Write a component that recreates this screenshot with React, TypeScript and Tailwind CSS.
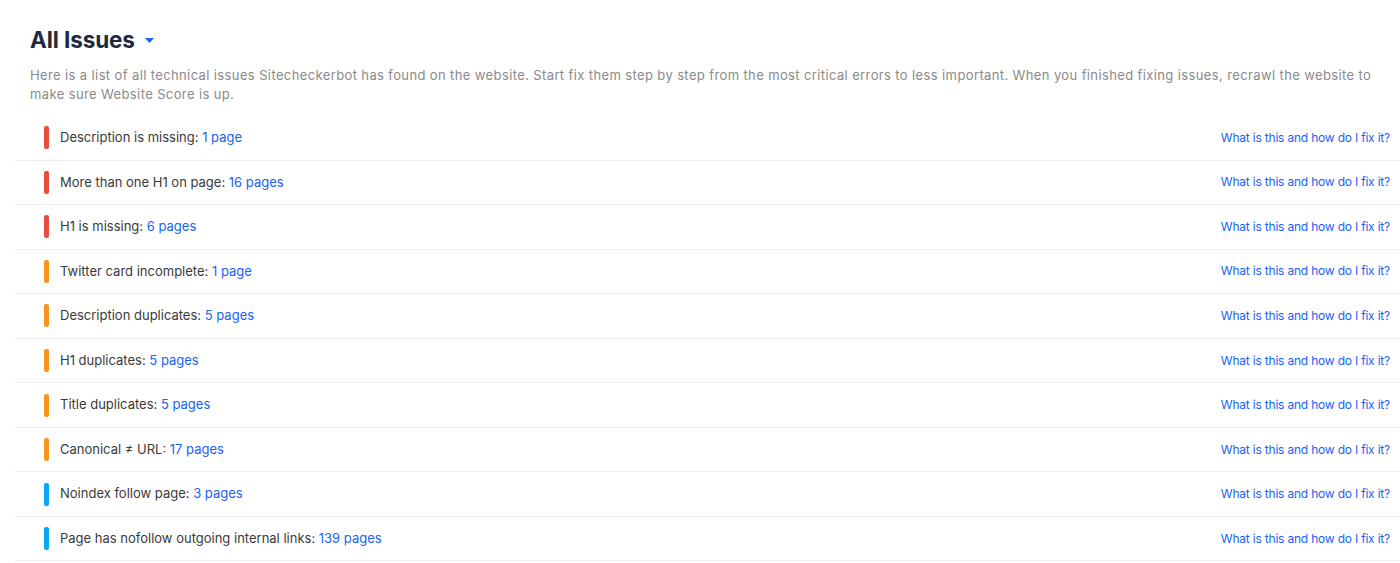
const issues = [
  { label: 'Description is missing:', count: '1 page', level: 'critical' },
  { label: 'More than one H1 on page:', count: '16 pages', level: 'critical' },
  { label: 'H1 is missing:', count: '6 pages', level: 'critical' },
  { label: 'Twitter card incomplete:', count: '1 page', level: 'warning' },
  { label: 'Description duplicates:', count: '5 pages', level: 'warning' },
  { label: 'H1 duplicates:', count: '5 pages', level: 'warning' },
  { label: 'Title duplicates:', count: '5 pages', level: 'warning' },
  { label: 'Canonical ≠ URL:', count: '17 pages', level: 'warning' },
  { label: 'Noindex follow page:', count: '3 pages', level: 'notice' },
  { label: 'Page has nofollow outgoing internal links:', count: '139 pages', level: 'notice' },
];

const barColor: Record<string, string> = {
  critical: 'bg-[#e74c3c]',
  warning: 'bg-[#f7941d]',
  notice: 'bg-[#0aa7f5]',
};

export default function App() {
  return (
    <div className="min-h-screen bg-white font-['Inter',sans-serif] overflow-hidden">
      <div className="pl-[30px] pr-[20px] pt-[24px]">
        <div className="flex items-center gap-[10px]">
          <h1 className="text-[22.5px] font-bold text-[#1d2a3f] leading-[32px] tracking-[-0.1px]">All Issues</h1>
          <svg width="9" height="5" viewBox="0 0 9 5" className="mt-[1px]">
            <path d="M0 0h9L4.5 5z" fill="#1a62f5" />
          </svg>
        </div>
        <p className="mt-[10px] text-[13px] leading-[19px] text-[#8a8a8a] tracking-[0.38px]">
          Here is a list of all technical issues Sitecheckerbot has found on the website. Start fix them step by step from the most critical errors to less important. When you finished fixing issues, recrawl the website to make sure Website Score is up.
        </p>
      </div>
      <div className="ml-[15px] mt-[12px]">
        {issues.map((it) => (
          <div
            key={it.label}
            className="flex items-center h-[44.56px] border-b border-[#eeeff1] pl-[29px] pr-[10px]"
          >
            <span className={`w-[5px] h-[23px] rounded-[2px] ${barColor[it.level]}`} />
            <span className="ml-[11px] text-[13px] text-[#3a3a3a]">
              {it.label} <a className="text-[#1a62f5]">{it.count}</a>
            </span>
            <a className="ml-auto text-[12px] text-[#1a62f5] tracking-[-0.2px]">What is this and how do I fix it?</a>
          </div>
        ))}
      </div>
    </div>
  );
}
